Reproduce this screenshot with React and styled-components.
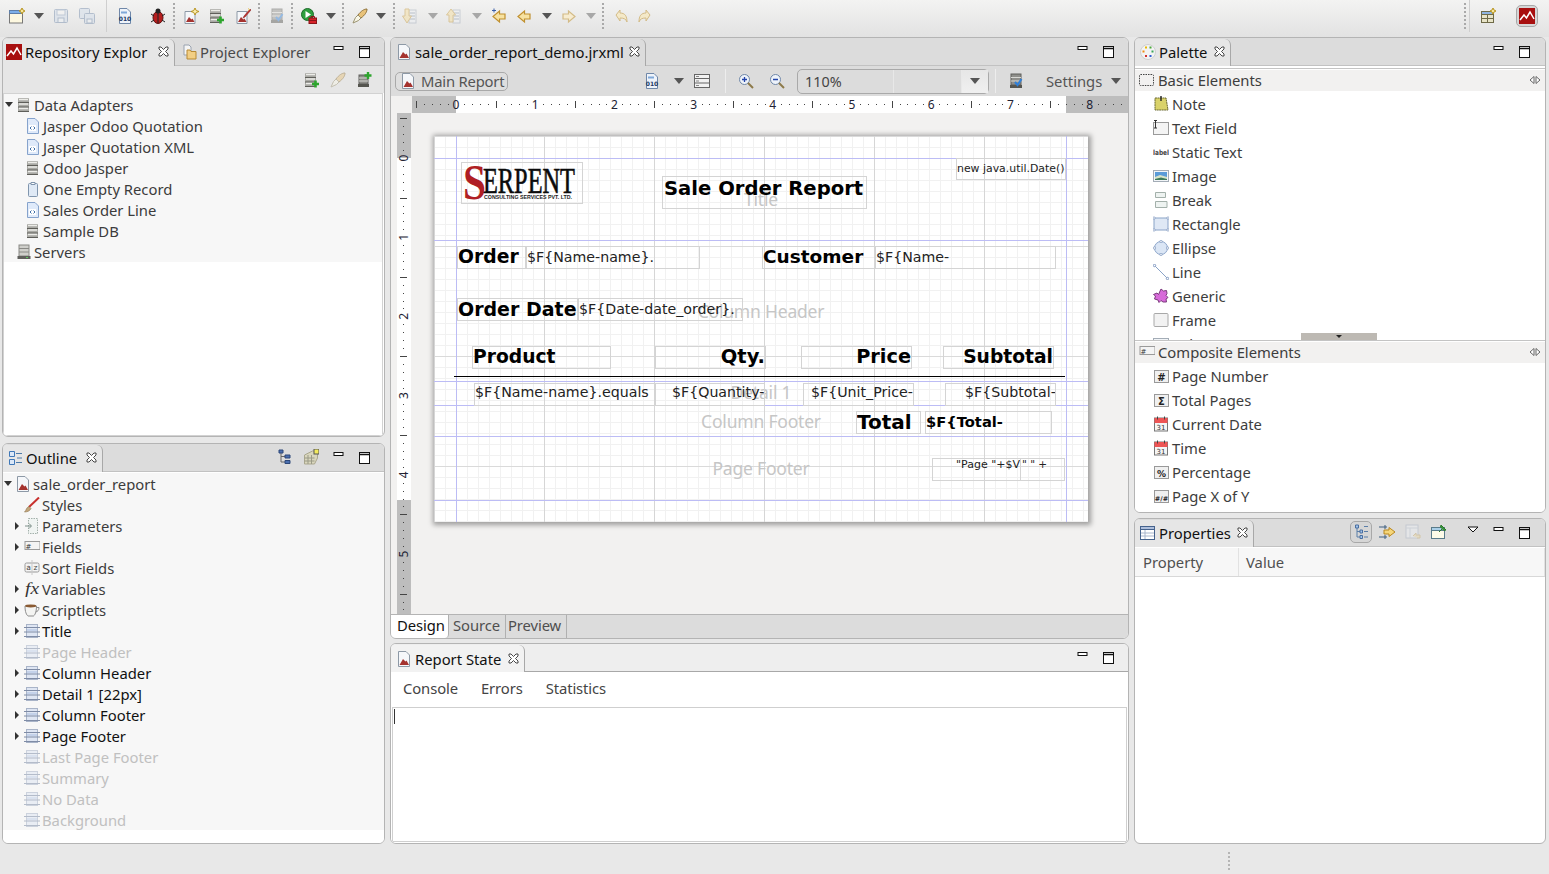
import React from 'react';
import styled, { createGlobalStyle } from 'styled-components';

const Global = createGlobalStyle`
  html, body { margin: 0; padding: 0; height: 100%; overflow: hidden; }
  body { background: #e8e8e8; font-family: "Noto Sans", "Open Sans", sans-serif; font-size: 14px; color: #3c3c3c; }
`;

const Shell = styled.div`
  width: 1549px;
  height: 874px;
  display: flex;
  flex-direction: column;
  background: #e8e8e8;
`;

const TopBar = styled.div`
  height: 37px;
  flex: none;
  display: flex;
  align-items: center;
  padding-bottom: 5px;
  box-sizing: border-box;
  background: linear-gradient(#f3f3f2, #e2e2e2);
`;

const ToolSlot = styled.span`
  flex: none;
  display: flex;
  align-items: center;
  justify-content: center;
  width: ${p => p.$w}px;
  margin-left: ${p => p.$gap}px;
  opacity: ${p => (p.$off ? 0.45 : 1)};
`;

const Dots = styled.span`
  display: block;
  height: 26px;
  border-left: 2px dotted #a9a9a9;
`;

const Rule = styled.span`
  display: block;
  height: ${p => p.$h || 32}px;
  border-left: 1px solid ${p => p.$c || '#cfcfcf'};
`;

const Pressed = styled.span`
  display: flex;
  padding: 2px;
  margin: 0 -3px;
  border: 1px solid #a8a8a8;
  border-radius: 5px;
  background: #d6d6d6;
`;

const Columns = styled.div`
  flex: none;
  height: 807px;
  display: grid;
  grid-template-columns: 383px 739px 412px;
  column-gap: 5px;
  padding-left: 2px;
`;

const Column = styled.div`
  display: flex;
  flex-direction: column;
  gap: ${p => p.$gap}px;
  min-height: 0;
`;

const Panel = styled.section`
  height: ${p => p.$h}px;
  flex: none;
  box-sizing: border-box;
  display: flex;
  flex-direction: column;
  border: 1px solid #b4b4b4;
  border-radius: 6px;
  background: #fff;
  overflow: hidden;
`;

const Strip = styled.div`
  height: 27px;
  flex: none;
  display: flex;
  align-items: flex-end;
  background: ${p => p.$light ? '#eeeeee' : '#dcdcdc'};
  border-bottom: 1px solid ${p => p.$light ? '#a8a8a8' : '#c2c2c2'};
`;

const Tab = styled.div`
  height: 27px;
  box-sizing: border-box;
  width: ${p => p.$w}px;
  flex: none;
  display: flex;
  align-items: center;
  gap: 3px;
  padding: 0 0 ${p => (p.$low ? 0 : 2)}px ${p => p.$pad || 4}px;
  margin-bottom: -1px;
  color: ${p => (p.$active ? '#111' : '#4a4a4a')};
  font-size: 14.8px;
  white-space: nowrap;
  background: ${p => p.$active ? p.$bg || '#e6e6e6' : 'transparent'};
  border-right: 1px solid ${p => (p.$active ? '#a8a8a8' : 'transparent')};
  border-top-right-radius: 6px;
`;

const CloseMark = styled.svg`
  width: 11px;
  height: 11px;
  margin-left: auto;
  margin-right: 5px;
  flex: none;
`;

const StripEnd = styled.div`
  margin-left: auto;
  height: 27px;
  display: flex;
  align-items: center;
  gap: 10px;
  padding-right: ${p => p.$right || 11}px;
  padding-bottom: 2px;
  box-sizing: border-box;
`;

const Nudge = styled.span`
  margin-left: -8px;
`;

const ViewBar = styled.div`
  height: 27px;
  flex: none;
  display: flex;
  align-items: center;
  justify-content: flex-end;
  gap: 10px;
  padding-right: 12px;
  background: #e6e6e6;
`;

const TreeBox = styled.div`
  flex: 1;
  min-height: 0;
  margin: ${p => (p.$boxed ? '0 1px 0 0' : '1px 0 0')};
  background: #fff;
  border: ${p => (p.$boxed ? '1px solid #d2d2d2' : 'none')};
`;

const TreeFill = styled.div`
  background: #f7f7f7;
`;

const Row = styled.div`
  height: 21px;
  display: flex;
  align-items: center;
  gap: 2px;
  padding-left: ${p => p.$level * 9}px;
  white-space: nowrap;
  font-size: 14.8px;
  color: ${p => (p.$muted ? '#c0c0c0' : p.$dark ? '#111' : '#3c3c3c')};
`;

const Twist = styled.span`
  width: 9px;
  flex: none;
  display: flex;
  justify-content: center;
  &::before {
    content: '';
    display: ${p => (p.$open === undefined ? 'none' : 'block')};
    border-style: solid;
    border-color: transparent;
    ${p => p.$open
      ? 'border-width: 5px 4px 0 4px; border-top-color: #333;'
      : 'border-width: 4px 0 4px 4px; border-left-color: #333;'}
  }
`;

const IconSlot = styled.span`
  width: 17px;
  height: 16px;
  flex: none;
  display: flex;
  justify-content: center;
  align-items: center;
  opacity: ${p => (p.$off ? 0.55 : 1)};
`;

/* editor */
const EditBar = styled.div`
  height: 30px;
  flex: none;
  display: flex;
  align-items: center;
  background: #dcdcdc;
  padding-left: 4px;
`;

const ModeBtn = styled.div`
  width: 113px;
  height: 19px;
  box-sizing: border-box;
  display: flex;
  align-items: center;
  gap: 5px;
  padding-left: 4px;
  border: 1px solid #a9a9a9;
  border-radius: 5px;
  background: #dedede;
  color: #555;
  font-size: 14.8px;
  letter-spacing: -0.2px;
`;

const EditTool = styled.span`
  flex: none;
  display: flex;
  justify-content: center;
  width: ${p => p.$w}px;
  margin-left: ${p => p.$gap || 0}px;
`;

const Combo = styled.div`
  width: 192px;
  height: 25px;
  box-sizing: border-box;
  flex: none;
  margin-left: 12px;
  display: grid;
  grid-template-columns: 96px 68px 1fr;
  border: 1px solid #a9a9a9;
  border-radius: 5px;
  background: #dcdcdc;
  color: #444;
  font-size: 14.4px;
  line-height: 23px;
`;

const ComboCell = styled.span`
  padding-left: ${p => p.$pad || 0}px;
  border-right: ${p => (p.$end ? 'none' : '1px solid #e8e8e8')};
  display: flex;
  align-items: center;
  justify-content: ${p => (p.$end ? 'center' : 'flex-start')};
  background: ${p => (p.$end ? 'linear-gradient(#e6e6e6, #f0f0f0)' : 'transparent')};
`;

const SettingsLabel = styled.span`
  margin-left: 22px;
  color: #555;
  font-size: 14.8px;
`;

const TopRuler = styled.div`
  height: 17px;
  flex: none;
  display: flex;
  background: #f2f1f0;
`;

const RulerH = styled.svg`
  margin-left: 21px;
  display: block;
`;

const Work = styled.div`
  flex: 1;
  min-height: 0;
  display: flex;
  background: #f2f1f0;
`;

const RulerV = styled.svg`
  margin-left: 6px;
  flex: none;
  display: block;
`;

const Canvas = styled.div`
  flex: 1;
  padding: 23px 0 0 22px;
  overflow: hidden;
`;

const Page = styled.div`
  position: relative;
  width: 654px;
  height: 386px;
  background-color: #fff;
  background-image:
    linear-gradient(to right, #d6d6d6 1px, transparent 1px),
    linear-gradient(to bottom, #dadada 1px, transparent 1px),
    linear-gradient(to right, #f1f1f1 1px, transparent 1px),
    linear-gradient(to bottom, #f1f1f1 1px, transparent 1px);
  background-size: 110px 110px, 110px 110px, 11px 11px, 11px 11px;
  box-shadow: 1px 1px 5px 2px rgba(0, 0, 0, 0.35);
`;

const Guide = styled.div`
  position: absolute;
  background: #bcbcf5;
  ${p => p.$x !== undefined
    ? `left:${p.$x - 434}px; top:0; bottom:0; width:1px;`
    : `top:${p.$y - 136}px; left:0; right:0; height:1px;`}
`;

const Cell = styled.div`
  position: absolute;
  left: ${p => p.$x - 434}px;
  top: ${p => p.$y - 136}px;
  width: ${p => p.$w}px;
  height: ${p => p.$h}px;
  box-sizing: border-box;
  border: 1px solid #d4d4d4;
  display: flex;
  align-items: ${p => p.$top ? 'flex-start' : 'center'};
  justify-content: ${p => p.$right ? 'flex-end' : 'flex-start'};
  white-space: nowrap;
  overflow: hidden;
  font-family: "DejaVu Sans", sans-serif;
  font-size: ${p => p.$size || 14.2}px;
  line-height: ${p => (p.$top ? 1 : 'normal')};
  font-weight: ${p => (p.$bold ? 700 : 400)};
  color: ${p => (p.$bold ? '#000' : '#222')};
  padding: ${p => p.$pad || '0 0 2px 0'};
`;

const BandName = styled.div`
  position: absolute;
  left: 0;
  width: 654px;
  top: ${p => p.$y - 136 - 12}px;
  height: 22px;
  line-height: 22px;
  text-align: center;
  font-size: 17.5px;
  letter-spacing: -0.2px;
  color: #c6c6c6;
`;

const HeadLine = styled.div`
  position: absolute;
  left: 20px;
  top: 240px;
  width: 611px;
  height: 1px;
  background: #000;
`;

const EditorTabs = styled.div`
  height: 23px;
  flex: none;
  display: flex;
  background: #dcdcdc;
  border-top: 1px solid #b4b4b4;
`;

const BottomTab = styled.div`
  width: ${p => p.$w}px;
  box-sizing: border-box;
  padding-left: ${p => p.$pad}px;
  line-height: 21px;
  font-size: 14.8px;
  letter-spacing: -0.1px;
  color: ${p => (p.$active ? '#111' : '#4f4f4f')};
  background: ${p => (p.$active ? '#fff' : 'transparent')};
  border-right: 1px solid #b0b0b0;
  border-bottom-right-radius: ${p => (p.$active ? 4 : 0)}px;
`;

/* report state */
const StateBody = styled.div`
  flex: 1;
  min-height: 0;
  display: flex;
  flex-direction: column;
  background: #fff;
`;

const StateTabs = styled.div`
  height: 35px;
  box-sizing: border-box;
  flex: none;
  display: flex;
  align-items: center;
  gap: 23px;
  padding: 0 0 3px 12px;
  color: #444;
  font-size: 14.8px;
  letter-spacing: -0.1px;
`;

const Console = styled.div`
  flex: 1;
  margin: 0 1px 1px 1px;
  border: 1px solid #cfcfcf;
  background: #fff;
  padding: 1px 0 0 1px;
`;

const Caret = styled.div`
  width: 1px;
  height: 15px;
  background: #333;
`;

/* palette */
const PaletteBody = styled.div`
  flex: 1;
  min-height: 0;
  display: flex;
  flex-direction: column;
  padding-top: 2px;
  background: #fff;
`;

const Drawer = styled.div`
  height: ${p => p.$h}px;
  box-sizing: border-box;
  flex: none;
  overflow: hidden;
  position: relative;
  border-top: 1px solid #c4c4c4;
  padding-top: 1px;
`;

const DrawerHead = styled.div`
  height: 21px;
  box-sizing: border-box;
  margin-bottom: 1px;
  display: flex;
  align-items: center;
  gap: 3px;
  padding: 0 4px 2px 4px;
  background: #f2f1f0;
  font-size: 14.8px;
  color: #3d3d3d;
`;

const DrawerItem = styled.div`
  height: 24px;
  display: flex;
  align-items: center;
  gap: 3px;
  padding-left: 17px;
  font-size: 14.8px;
  color: #3d3d3d;
  white-space: nowrap;
`;

const Flip = styled.svg`
  margin-left: auto;
`;

const Scroller = styled.div`
  position: absolute;
  left: 166px;
  bottom: 0;
  width: 76px;
  height: 7px;
  background: #bdb9b3;
  display: flex;
  justify-content: center;
  &::before {
    content: '';
    margin-top: 2px;
    height: 0;
    border-style: solid;
    border-width: 3px 3px 0 3px;
    border-color: #222 transparent transparent;
  }
`;

const PropHead = styled.div`
  height: 28px;
  flex: none;
  margin-top: 1px;
  display: grid;
  grid-template-columns: 104px 1fr;
  background: #f7f7f7;
  border-bottom: 1px solid #d8d8d8;
  font-size: 14.8px;
  color: #505050;
`;

const PropCell = styled.div`
  display: flex;
  align-items: center;
  padding-left: ${p => p.$pad}px;
  border-right: 1px solid #e2e2e2;
`;

const StatusBar = styled.div`
  flex: 1;
  display: flex;
  align-items: center;
  padding: 3px 0 0 1228px;
`;

const StatusGrip = styled.span`
  display: block;
  height: 18px;
  border-left: 2px dotted #b5b5b5;
`;

/* icons */
const Svg = ({ s = 16, children }) => (
  <svg width={s} height={s} viewBox="0 0 16 16">{children}</svg>
);

const Doc = ({ fill = '#f5f7fa', line = '#8d99a6' }) => (
  <path d="M2.5 .5h7.5l3.5 3.5v11.5h-11z" fill={fill} stroke={line} />
);
const Stack = ({ x = 2 }) => (
  <g>
    <rect x={x} y="1" width="11" height="14" rx="1" fill="#a9a9a4" />
    <path d={`M${x} 5.500h11M${x} 10h11M${x} 14.500h11`} stroke="#5f5f5a" />
    <path d={`M${x + 1} 2.500h9M${x + 1} 7h9M${x + 1} 11.500h9`} stroke="#ecece8" strokeWidth="1.500" />
  </g>
);
const Plus = () => <path d="M11.500 8.500v7M8 12h7" stroke="#2ea52e" strokeWidth="2.600" />;
const Band = () => (
  <g>
    <rect x="2.500" y="1.500" width="11" height="13" fill="#dfe6f3" stroke="#a9b4c8" />
    <path d="M0 4.500h16M0 9h16M0 13.500h16" stroke="#7f8ca6" />
    <path d="M3 6h10v2H3z" fill="#c4d2ea" />
  </g>
);
const Cal = () => (
  <g>
    <rect x="1.500" y="2" width="13" height="13" fill="#f5f5f5" stroke="#777" />
    <rect x="1.500" y="2" width="13" height="5" fill="#ee5555" />
    <path d="M4.500 .5v3M11.500 .5v3" stroke="#444" />
    <text x="8" y="14" fontSize="7" textAnchor="middle" fontFamily="DejaVu Sans" fill="#333">31</text>
  </g>
);
const Chip = ({ t, size = 10 }) => (
  <g>
    <rect x="1.500" y="2.500" width="14" height="12" fill="#f0f0f0" stroke="#999" />
    <text x="8.500" y="12.500" fontSize={size} textAnchor="middle" fontWeight="700" fontFamily="DejaVu Sans" fill="#222">{t}</text>
  </g>
);
const Mountain = () => <path d="M3.500 14l3.500-6 2.500 2.500 1-1 2.500 4.500z" fill="#a5332f" />;
const ArrowDoc = ({ up }) => (
  <g>
    <rect x="8" y="2" width="7" height="13" fill="#eef1f5" stroke="#a0aab8" />
    <path d="M9 5h5M9 8h5M9 11h5" stroke="#7c8aa0" />
    <path d={up ? 'M6 1l4.500 6H8v7H4V7H1.500z' : 'M4 1h4v7h2.500L6 15 1.500 8H4z'} fill="#f6dd9a" stroke="#c59a3c" />
  </g>
);
const Hand = ({ dir = 1, fill = '#f7e2a1', line = '#c0902f' }) => (
  <path transform={dir < 0 ? 'translate(16 0) scale(-1 1)' : undefined} d="M7.500 3v3H2v5h5.500v3L14 8.500z" fill={fill} stroke={line} strokeWidth="1.200" />
);
const ReportStar = () => (
  <g>
    <path d="M2 3.500h10v12H2z" fill="#f5f7fa" stroke="#8d99a6" />
    <path d="M3 14l3-5 2.500 2.500 1-1 2 3.500z" fill="#a5332f" />
  </g>
);

const icons = {
  report: <Svg><Doc /><Mountain /></Svg>,
  server: <Svg><Stack /></Svg>,
  serverAdd: <Svg><Stack x={1} /><Plus /></Svg>,
  xml: (
    <Svg>
      <Doc fill="#dfeafa" line="#86a3cc" />
      <rect x="4" y="7" width="7" height="6" fill="#fff" />
      <path d="M6.500 8.500L5 10l1.500 1.500M8.500 8.500L10 10l-1.500 1.500" fill="none" stroke="#3f6fa8" />
    </Svg>
  ),
  empty: <Svg><rect x="3.500" y="2.500" width="9" height="13" rx="1" fill="#dfe9f5" stroke="#8095ad" /><path d="M6 1.500h4v2H6z" fill="#fff" stroke="#8095ad" /></Svg>,
  host: (
    <Svg>
      <rect x="3" y="1" width="10" height="11" fill="#cfcfcb" stroke="#8a8a86" />
      <path d="M3 4.500h10M3 8h10" stroke="#8a8a86" />
      <rect x="1.500" y="12" width="13" height="3" fill="#5f5f5c" />
      <rect x="10" y="13" width="2" height="1" fill="#5fc85f" />
    </Svg>
  ),
  hostAdd: (
    <Svg>
      <rect x="3" y="3" width="9" height="9" fill="#8d8d88" stroke="#5f5f5c" />
      <path d="M3 6h9M3 9h9" stroke="#d8d8d4" />
      <rect x="2" y="12" width="11" height="3" fill="#55554f" />
      <path d="M12 0v7M8.500 3.500h7" stroke="#2ea52e" strokeWidth="2.400" />
    </Svg>
  ),
  jasper: (
    <Svg>
      <rect width="16" height="16" fill="#a80f0f" />
      <path d="M1 12l4-5 2.500 3L11 4l4 7" fill="none" stroke="#fff" strokeWidth="1.500" />
    </Svg>
  ),
  folder: (
    <Svg>
      <path d="M3 1h5l2 2v8H3z" fill="#f5f5f5" stroke="#9aa3b0" />
      <path d="M6 6h3l1 1.500h5V15H6z" fill="#f2cf85" stroke="#b88a35" />
    </Svg>
  ),
  outline: (
    <Svg>
      <path d="M2.500 1.500h5v5h-5zM2.500 9.500h5v5h-5z" fill="#dbe8f8" stroke="#3f78b8" />
      <path d="M9 3.500h6M10 8h5M9 12.500h6" stroke="#4d7aa8" strokeWidth="1.200" />
    </Svg>
  ),
  tree: (
    <Svg>
      <path d="M4 2v11h4M4 7.500h4" fill="none" stroke="#666" />
      <path d="M2 1h4v3H2zM8 6h5v3H8zM8 11.500h5v3H8z" fill="#4a6fb0" stroke="#2c4778" />
    </Svg>
  ),
  tableStar: (
    <Svg>
      <path d="M1.500 6l8-4h5v7l-3 6h-10z" fill="#d9d6bd" stroke="#aaa78e" />
      <path d="M1.500 9h10M1.500 12h10M5 6v9M8.500 6v9" stroke="#9b9b88" />
      <rect x="11" y="0" width="5" height="5" fill="#f3ea5d" stroke="#555" />
    </Svg>
  ),
  styles: (
    <Svg>
      <path d="M15 .5L5 10" stroke="#c8302c" strokeWidth="2" />
      <path d="M5 9.500l2 2C6 14 3 15 .5 15c2-1.500 1.500-4.500 4.500-5.500z" fill="#c4a77d" stroke="#8a7046" strokeWidth=".6" />
    </Svg>
  ),
  params: (
    <Svg>
      <path d="M4.500 .5h9v15h-9z" fill="#f0f4f2" stroke="#a3b0aa" strokeDasharray="1.500 1" />
      <path d="M1 8h6M5 5.500L7.500 8 5 10.500" fill="none" stroke="#7e908a" />
    </Svg>
  ),
  field: (
    <Svg>
      <rect x="1" y="2.500" width="15" height="8" fill="#f4f4f4" stroke="#9a9a9a" />
      <text x="4.500" y="9.500" fontSize="7" textAnchor="middle" fontFamily="DejaVu Sans" fill="#333">#</text>
    </Svg>
  ),
  sort: (
    <Svg>
      <rect x="1" y="3" width="14" height="9" rx="1.500" fill="#f4f4f4" stroke="#9a9a9a" />
      <path d="M8 0v15" stroke="#c9c9c9" />
      <text x="4.500" y="10" fontSize="7.500" textAnchor="middle" fontFamily="DejaVu Sans" fill="#444">a</text>
      <text x="11.500" y="10" fontSize="7.500" textAnchor="middle" fontFamily="DejaVu Sans" fill="#444">z</text>
    </Svg>
  ),
  fx: <Svg><text x="1" y="12.500" fontSize="17" fontStyle="italic" fontFamily="Liberation Serif" fill="#333" textLength="14" lengthAdjust="spacingAndGlyphs">fx</text></Svg>,
  cup: (
    <Svg>
      <path d="M1 4h11.500c0 6-1.500 9-3 10H4C2.500 13 1 10 1 4z" fill="#f4f4f2" stroke="#8c8c8c" />
      <path d="M12.500 5.500h2.500c0 3-1.500 4-3.500 4.500" fill="none" stroke="#8c8c8c" />
      <ellipse cx="6.700" cy="4" rx="5.500" ry="1.400" fill="#8a5a32" />
    </Svg>
  ),
  band: <Svg><Band /></Svg>,
  palette: (
    <Svg>
      <circle cx="8" cy="8" r="7.500" fill="#f3f3f3" stroke="#cfcfcf" />
      <path d="M5 2.500h2v2H5z" fill="#e8b800" /><path d="M9.500 2.500h2v2h-2z" fill="#49a83a" />
      <path d="M2.500 6.500h2v2h-2z" fill="#ef8d12" /><path d="M11.500 6.500h2v2h-2z" fill="#3aa55a" />
      <path d="M5 11h2v2H5z" fill="#d22f2f" /><path d="M9.500 11h2v2h-2z" fill="#2f5fd2" />
    </Svg>
  ),
  drawer: <Svg><rect x=".5" y="2.500" width="14" height="11" rx="1" fill="none" stroke="#444" strokeDasharray="1.500 1" /></Svg>,
  note: (
    <Svg>
      <path d="M2 2h11l2 12H2z" fill="#d9d26a" stroke="#6c6a32" strokeDasharray="2 .5" />
      <path d="M8 0v5" stroke="#222" strokeWidth="1.400" />
    </Svg>
  ),
  textField: (
    <Svg>
      <rect x=".5" y="2.500" width="15" height="12" fill="#f4f4f4" stroke="#9a9a9a" />
      <path d="M2.500 0v8M1 .5h3M1 8h3" stroke="#333" fill="none" />
    </Svg>
  ),
  label: <Svg><text x="0" y="11" fontSize="7.200" fontWeight="700" textLength="16" lengthAdjust="spacingAndGlyphs" fontFamily="DejaVu Sans" fill="#444">label</text></Svg>,
  image: (
    <Svg>
      <rect x=".5" y="2.500" width="15" height="11" fill="#f2f5f8" stroke="#a3acb6" />
      <rect x="2" y="4" width="12" height="8" fill="#5a9bd8" />
      <path d="M2 9l5-2 7 2v3H2z" fill="#d7e3c8" />
      <path d="M2 11l6-1.500 6 1.500v1H2z" fill="#3d7a5a" />
    </Svg>
  ),
  pageBreak: (
    <Svg>
      <path d="M2.500 .5h10v5h-10zM2.500 9.500h11.500v6H2.500z" fill="#eef3f1" stroke="#a3b0aa" />
      <path d="M1 7.500h14" stroke="#fff" />
    </Svg>
  ),
  rect: (
    <Svg>
      <rect x="1" y="2" width="14" height="12" fill="#dfe8f5" stroke="#8aa3c8" />
      <path d="M0 1h2v2H0zM14 1h2v2h-2zM0 13h2v2H0zM14 13h2v2h-2z" fill="#fff" stroke="#7f99c0" strokeWidth=".6" />
    </Svg>
  ),
  ellipse: (
    <Svg>
      <circle cx="8" cy="8" r="6.500" fill="#dbe6f5" stroke="#8aa3c8" />
      <path d="M7 .5h2v2H7zM7 13.500h2v2H7zM.5 7h2v2h-2zM13.500 7h2v2h-2z" fill="#fff" stroke="#7f99c0" strokeWidth=".6" />
    </Svg>
  ),
  line: (
    <Svg>
      <path d="M1.500 1.500l13 13" stroke="#8aa3c8" />
      <circle cx="1.500" cy="1.500" r="1.200" fill="#fff" stroke="#7f99c0" />
      <circle cx="14.500" cy="14.500" r="1.200" fill="#fff" stroke="#7f99c0" />
    </Svg>
  ),
  generic: (
    <Svg>
      <path d="M8 1l2.500 2 3-.5.500 3-1 2 2 2-2 1.500.5 3H10l-2-1.500L6 14.500 5 12 1.500 11 2.500 8 .5 6.500 4 5 5.500 6.500z" fill="#d76ad9" stroke="#7b3b7d" />
    </Svg>
  ),
  frame: <Svg><rect x="1" y="1.500" width="14" height="13" rx="1" fill="#f2f2f2" stroke="#a8a8a8" /></Svg>,
  hash: <Svg><Chip t="#" /></Svg>,
  sigma: <Svg><Chip t="Σ" /></Svg>,
  cal: <Svg><Cal /></Svg>,
  percent: <Svg><Chip t="%" size={9} /></Svg>,
  pagexy: <Svg><Chip t="#/#" size={6.500} /></Svg>,
  table: (
    <Svg>
      <rect x=".5" y="1.500" width="14" height="13" fill="#fff" stroke="#45628c" />
      <rect x=".5" y="1.500" width="14" height="3" fill="#aebfdc" stroke="#45628c" />
      <path d="M1 8h13M1 11h13M5 5v9" stroke="#a8b6cc" />
    </Svg>
  ),
  treeProp: (
    <Svg>
      <path d="M4 3v10h3M4 7.500h3" fill="none" stroke="#5a7ea8" />
      <path d="M2.500 1h3v3h-3zM7 6h2.500v3H7zM7 11.500h2.500v3H7z" fill="#a3c4ea" stroke="#4a6fa0" />
      <path d="M11 2.500h4M11 7.500h4M11 13h4" stroke="#5a7ea8" />
    </Svg>
  ),
  advProp: (
    <Svg>
      <path d="M0 3h8M0 13h8M6 1v4M6 11v4" stroke="#3f5f80" />
      <path d="M5 6h5V3.500L16 8l-6 4.500V10H5z" fill="#f5d67a" stroke="#b8861f" />
    </Svg>
  ),
  restore: (
    <Svg>
      <rect x="1" y="1" width="12" height="13" fill="#eef1f5" stroke="#a9b4c4" />
      <path d="M1 4h12M5 4v10" stroke="#bcc5d2" />
      <path d="M8 12l3-3v2h4v3h-3" fill="#ecd9a8" stroke="#c7ab6c" />
    </Svg>
  ),
  pin: (
    <Svg>
      <rect x=".5" y="3.500" width="13" height="11" fill="#fdfbe8" stroke="#5a7b8a" />
      <rect x=".5" y="3.500" width="13" height="3" fill="#a9cfe8" stroke="#5a7b8a" />
      <path d="M8 8l3-3M10 1l5 5-2 .500-3.500-3.500z" fill="#3d9a3d" stroke="#2a7a2a" />
    </Svg>
  ),
  newWin: (
    <Svg>
      <rect x=".5" y="2.500" width="13" height="12.500" fill="#fdf8e0" stroke="#777" />
      <rect x=".5" y="2.500" width="13" height="3" fill="#7fb0e8" stroke="#5f7fa8" />
      <path d="M13 0l1 2 2 1-2 1-1 2-1-2-2-1 2-1z" fill="#f8e79a" stroke="#b8941f" />
    </Svg>
  ),
  perspective: (
    <Svg>
      <rect x="1.500" y="3.500" width="12" height="11" fill="#e8e4c8" stroke="#6e6a48" />
      <rect x="1.500" y="3.500" width="12" height="3" fill="#8fb4e0" stroke="#6e6a48" />
      <path d="M7.500 6.500v8M1.500 10.500h12" stroke="#6e6a48" />
      <path d="M13 0l1 2 2 1-2 1-1 2-1-2-2-1 2-1z" fill="#f8e79a" stroke="#b8941f" />
    </Svg>
  ),
  save: (
    <Svg>
      <rect x="1.500" y="1.500" width="13" height="13" rx="1" fill="#cfdbea" stroke="#6f87a8" />
      <rect x="4" y="2" width="8" height="5" fill="#f5f5f5" stroke="#8aa0bd" />
      <rect x="5" y="10" width="6" height="4.500" fill="#eef2f7" stroke="#6f87a8" />
    </Svg>
  ),
  saveAll: (
    <Svg>
      <rect x=".5" y=".5" width="10" height="10" rx="1" fill="#cfdbea" stroke="#6f87a8" />
      <rect x="5.500" y="5.500" width="10" height="10" rx="1" fill="#cfdbea" stroke="#6f87a8" />
      <rect x="8" y="11" width="5" height="4" fill="#eef2f7" stroke="#6f87a8" />
    </Svg>
  ),
  bin: (
    <Svg>
      <Doc fill="#eef3fa" line="#6f87a8" />
      <rect x="4" y="3.500" width="6" height="2" fill="#7fa8d8" />
      <text x="8" y="13" fontSize="6" fontWeight="700" textAnchor="middle" fontFamily="DejaVu Sans" fill="#223a66">010</text>
    </Svg>
  ),
  bug: (
    <Svg>
      <ellipse cx="8" cy="9.500" rx="5" ry="6" fill="#b51e1e" stroke="#5f1010" />
      <circle cx="8" cy="3" r="2.500" fill="#222" />
      <path d="M8 4v11M1 6l3 2M15 6l-3 2M1 14l3-2M15 14l-3-2" stroke="#222" />
    </Svg>
  ),
  addReport: (
    <Svg>
      <ReportStar />
      <path d="M12 0l1.200 2.500 2.800 1-2.800 1L12 7l-1.200-2.500L8 3.500l2.800-1z" fill="#fbeeb0" stroke="#b8941f" />
    </Svg>
  ),
  editReport: (
    <Svg>
      <ReportStar />
      <path d="M15 1l1 1-6 7-2 1 1-2z" fill="#c8302c" stroke="#7a1c1c" strokeWidth=".5" />
      <path d="M13 .5l1.500 1-1 1" stroke="#e8c75a" fill="none" />
    </Svg>
  ),
  check: (
    <Svg>
      <rect x="3" y="1" width="10" height="11" fill="#8f8f8b" stroke="#5f5f5b" />
      <path d="M3 4.500h10M3 8h10" stroke="#d8d8d4" />
      <rect x="2" y="12" width="12" height="3" fill="#55554f" />
      <path d="M7 9l2.500 3 4-6" fill="none" stroke="#2f7fd8" strokeWidth="2" />
    </Svg>
  ),
  run: (
    <Svg>
      <circle cx="6.500" cy="6.500" r="6" fill="#2f9f3f" stroke="#1d6b2a" />
      <path d="M4.500 3l5.500 3.500L4.500 10z" fill="#fff" />
      <rect x="8" y="10" width="7.500" height="5.500" fill="#d8232a" stroke="#8a1418" />
      <path d="M10 10V8.500h3.500V10M8 12.500h7.500" fill="none" stroke="#8a1418" />
    </Svg>
  ),
  pen: (
    <Svg>
      <path d="M15 1c0 3-2 6-6 9l-3-3c3-4 6-6 9-6z" fill="#e8c27a" stroke="#8f7136" />
      <path d="M6 7l3 3-2.500 2.500L1 15l2.500-5.500z" fill="#f8f6e6" stroke="#9a9270" />
    </Svg>
  ),
  downDoc: <Svg><ArrowDoc /></Svg>,
  upDoc: <Svg><ArrowDoc up /></Svg>,
  backStar: (
    <Svg>
      <Hand dir={-1} />
      <path d="M3 .5v4M1 2.500h4" stroke="#3a5fa8" />
    </Svg>
  ),
  back: <Svg><Hand dir={-1} /></Svg>,
  fwd: <Svg><Hand fill="#f7ecd0" line="#d3bb86" /></Svg>,
  undo: <Svg><path d="M3 7l4-5v3c5 0 7 3 7 9-1-3-3-4-7-4v3z" fill="#f4e9c8" stroke="#d3bb86" /></Svg>,
  redo: <Svg><path d="M13 7L9 2v3C4 5 2 8 2 14c1-3 3-4 7-4v3z" fill="#f4e9c8" stroke="#d3bb86" /></Svg>,
  arrow: <svg width="10" height="6" viewBox="0 0 10 6"><path d="M0 0h10L5 6z" fill="#555" /></svg>,
  zoomIn: (
    <Svg>
      <circle cx="6.500" cy="6.500" r="5" fill="#eef3fa" stroke="#6f87a8" />
      <path d="M10 10l5 5" stroke="#8d7a4a" strokeWidth="2" />
      <path d="M4 6.500h5M6.500 4v5" stroke="#2244aa" strokeWidth="1.300" />
    </Svg>
  ),
  zoomOut: (
    <Svg>
      <circle cx="6.500" cy="6.500" r="5" fill="#eef3fa" stroke="#6f87a8" />
      <path d="M10 10l5 5" stroke="#8d7a4a" strokeWidth="2" />
      <path d="M4 6.500h5" stroke="#2244aa" strokeWidth="1.300" />
    </Svg>
  ),
  bands: (
    <Svg>
      <rect x=".5" y="1.500" width="15" height="13" fill="#f2f2f2" stroke="#666" />
      <path d="M1 5.500h14M1 10h14" stroke="#666" />
      <path d="M2 3.500h3M2 8h3M2 12.500h3" stroke="#888" />
    </Svg>
  ),
};

const Close = () => (
  <CloseMark viewBox="0 0 11 11">
    <path d="M1 1h2l2.500 2.500L8 1h2v2L7.500 5.500 10 8v2H8L5.500 7.500 3 10H1V8l2.500-2.500L1 3z" fill="#fff" stroke="#333" strokeWidth=".9" />
  </CloseMark>
);

const WinControls = ({ extra, right }) => (
  <StripEnd $right={right}>
    {extra}
    <svg width="16" height="16" viewBox="0 0 16 16"><rect x="3" y="3.500" width="9" height="3" fill="#fff" stroke="#111" /></svg>
    <svg width="16" height="16" viewBox="0 0 16 16"><rect x="2.500" y="3.500" width="10" height="11" fill="#fff" stroke="#111" /><path d="M2.500 5.500h10" stroke="#111" strokeWidth="1.500" /></svg>
  </StripEnd>
);

// centre x of every item on the main toolbar
const mainTools = [
  ['newWin', 17], ['arrow', 39], ['save', 61, 1], ['saveAll', 87, 1], ['|', 106], ['bin', 125],
  ['bug', 158], [':', 174], ['addReport', 191], ['serverAdd', 217], ['editReport', 243], [':', 259],
  ['check', 277, 1], [':', 292], ['run', 309], ['arrow', 331], [':', 343], ['pen', 360], ['arrow', 381],
  [':', 394], ['downDoc', 409, 1], ['arrow', 433, 1], ['upDoc', 453, 1], ['arrow', 477, 1],
  ['backStar', 499], ['back', 524], ['arrow', 547], ['fwd', 569], ['arrow', 591, 1], [':', 603],
  ['undo', 621], ['redo', 645],
];

const slotWidth = k => (k === 'arrow' ? 10 : k === ':' || k === '|' ? 2 : 16);

function MainToolbar() {
  let right = 0;
  return (
    <TopBar>
      {mainTools.map(([k, c, off], i) => {
        const w = slotWidth(k);
        const gap = c - w / 2 - right;
        right = c + w / 2;
        return (
          <ToolSlot key={i} $w={w} $gap={gap} $off={off}>
            {k === ':' ? <Dots /> : k === '|' ? <Rule /> : icons[k]}
          </ToolSlot>
        );
      })}
      <ToolSlot $w={2} $gap={1464 - right}><Dots /></ToolSlot>
      <ToolSlot $w={1} $gap={3}><Rule /></ToolSlot>
      <ToolSlot $w={16} $gap={10}>{icons.perspective}</ToolSlot>
      <ToolSlot $w={24} $gap={19}><Pressed>{icons.jasper}</Pressed></ToolSlot>
    </TopBar>
  );
}

const repoRows = [
  { l: 0, open: true, i: 'server', t: 'Data Adapters' },
  { l: 1, i: 'xml', t: 'Jasper Odoo Quotation' },
  { l: 1, i: 'xml', t: 'Jasper Quotation XML' },
  { l: 1, i: 'server', t: 'Odoo Jasper' },
  { l: 1, i: 'empty', t: 'One Empty Record' },
  { l: 1, i: 'xml', t: 'Sales Order Line' },
  { l: 1, i: 'server', t: 'Sample DB' },
  { l: 0, i: 'host', t: 'Servers' },
];

const outlineRows = [
  { l: 0, open: true, i: 'report', t: 'sale_order_report' },
  { l: 1, i: 'styles', t: 'Styles' },
  { l: 1, open: false, i: 'params', t: 'Parameters' },
  { l: 1, open: false, i: 'field', t: 'Fields' },
  { l: 1, i: 'sort', t: 'Sort Fields' },
  { l: 1, open: false, i: 'fx', t: 'Variables' },
  { l: 1, open: false, i: 'cup', t: 'Scriptlets' },
  { l: 1, open: false, i: 'band', t: 'Title', dark: true },
  { l: 1, i: 'band', t: 'Page Header', muted: true },
  { l: 1, open: false, i: 'band', t: 'Column Header', dark: true },
  { l: 1, open: false, i: 'band', t: 'Detail 1 [22px]', dark: true },
  { l: 1, open: false, i: 'band', t: 'Column Footer', dark: true },
  { l: 1, open: false, i: 'band', t: 'Page Footer', dark: true },
  { l: 1, i: 'band', t: 'Last Page Footer', muted: true },
  { l: 1, i: 'band', t: 'Summary', muted: true },
  { l: 1, i: 'band', t: 'No Data', muted: true },
  { l: 1, i: 'band', t: 'Background', muted: true },
];

const Tree = ({ rows }) => (
  <TreeFill>
    {rows.map(r => (
      <Row key={r.t} $level={r.l} $muted={r.muted} $dark={r.dark}>
        <Twist $open={r.open} />
        <IconSlot $off={r.muted}>{icons[r.i]}</IconSlot>
        {r.t}
      </Row>
    ))}
  </TreeFill>
);

const basicItems = [
  ['note', 'Note'], ['textField', 'Text Field'], ['label', 'Static Text'], ['image', 'Image'],
  ['pageBreak', 'Break'], ['rect', 'Rectangle'], ['ellipse', 'Ellipse'], ['line', 'Line'],
  ['generic', 'Generic'], ['frame', 'Frame'], ['image', 'Subreport'],
];
const compositeItems = [
  ['hash', 'Page Number'], ['sigma', 'Total Pages'], ['cal', 'Current Date'], ['cal', 'Time'],
  ['percent', 'Percentage'], ['pagexy', 'Page X of Y'],
];

const FlipMark = () => (
  <Flip width="12" height="8" viewBox="0 0 12 8">
    <path d="M5 .5L1 4l4 3.500zM7 .5L11 4 7 7.500z" fill="#fff" stroke="#666" />
  </Flip>
);

function RulerTop() {
  const w = 717, zero = 44, unit = 79.2;
  const marks = [];
  for (let i = -5; i <= 85; i++) {
    const x = zero + i * unit / 10;
    if (x < 0 || x > w) continue;
    if (i % 10 === 0) continue;
    marks.push(<rect key={i} x={Math.round(x)} y={i % 5 === 0 ? 5 : 8} width="1" height={i % 5 === 0 ? 7 : 1} fill="#444" />);
  }
  return (
    <RulerH width={w} height="17">
      <rect width={w} height="17" fill="#fff" />
      <rect width={zero} height="17" fill="#bdbdbd" />
      <rect x={654} width={w - 654} height="17" fill="#bdbdbd" />
      {marks}
      {[0, 1, 2, 3, 4, 5, 6, 7, 8].map(n => (
        <text key={n} x={zero + n * unit} y="13" fontSize="12" textAnchor="middle" fontFamily="Noto Sans" fill="#223">{n}</text>
      ))}
    </RulerH>
  );
}

function RulerLeft() {
  const h = 501, zero = 45, unit = 79.2;
  const marks = [];
  for (let i = -5; i <= 58; i++) {
    const y = zero + i * unit / 10;
    if (y < 0 || y > h || i % 10 === 0) continue;
    marks.push(<rect key={i} x={i % 5 === 0 ? 3 : 6} y={Math.round(y)} width={i % 5 === 0 ? 7 : 1} height="1" fill="#444" />);
  }
  return (
    <RulerV width="15" height={h}>
      <rect width="14" height={h} fill="#fff" />
      <rect width="14" height={zero} fill="#bdbdbd" />
      <rect y="387" width="14" height={h - 387} fill="#bdbdbd" />
      {marks}
      {[0, 1, 2, 3, 4, 5].map(n => (
        <text key={n} transform={`translate(11 ${zero + n * unit}) rotate(-90)`} fontSize="12" textAnchor="middle" fontFamily="Noto Sans" fill="#223">{n}</text>
      ))}
    </RulerV>
  );
}

const LogoBox = () => (
  <svg width="120" height="40" viewBox="0 0 120 40">
    <text x="1" y="36" fontSize="50" fontWeight="700" fontFamily="Liberation Serif" fill="#b01f24" textLength="23" lengthAdjust="spacingAndGlyphs">S</text>
    <text x="21" y="30" fontSize="35" fontFamily="Liberation Serif" fill="#0b0b0b" textLength="92" lengthAdjust="spacingAndGlyphs" stroke="#0b0b0b" strokeWidth=".6">ERPENT</text>
    <text x="22" y="36" fontSize="5.500" fontWeight="700" fontFamily="Liberation Sans" fill="#222" textLength="88" lengthAdjust="spacingAndGlyphs">CONSULTING SERVICES PVT. LTD.</text>
  </svg>
);

const reportCells = [
  { x: 956, y: 158, w: 110, h: 22, size: 10.9, t: 'new java.util.Date()' },
  { x: 662, y: 176, w: 205, h: 33, size: 19.6, bold: true, top: true, t: 'Sale Order Report', pad: '2px 0 0 1px' },
  { x: 457, y: 246, w: 69, h: 23, size: 18.8, bold: true, t: 'Order' },
  { x: 526, y: 246, w: 174, h: 23, t: '$F{Name-name}.' },
  { x: 762, y: 246, w: 114, h: 23, size: 18.5, bold: true, t: 'Customer' },
  { x: 875, y: 246, w: 181, h: 23, t: '$F{Name-' },
  { x: 457, y: 298, w: 121, h: 23, size: 19, bold: true, t: 'Order Date' },
  { x: 578, y: 298, w: 165, h: 23, t: '$F{Date-date_order}.' },
  { x: 472, y: 346, w: 139, h: 23, size: 18.7, bold: true, t: 'Product' },
  { x: 655, y: 346, w: 111, h: 23, size: 19.5, bold: true, right: true, t: 'Qty.' },
  { x: 801, y: 346, w: 111, h: 23, size: 19.3, bold: true, right: true, t: 'Price' },
  { x: 943, y: 346, w: 111, h: 23, size: 18.7, bold: true, right: true, t: 'Subtotal' },
  { x: 474, y: 383, w: 181, h: 23, t: '$F{Name-name}.equals', pad: '0 0 6px 0' },
  { x: 655, y: 383, w: 110, h: 23, t: '$F{Quantity-', pad: '0 0 6px 16px' },
  { x: 803, y: 383, w: 111, h: 23, t: '$F{Unit_Price-', pad: '0 0 6px 7px' },
  { x: 945, y: 383, w: 111, h: 23, t: '$F{Subtotal-', pad: '0 0 6px 19px' },
  { x: 856, y: 411, w: 65, h: 23, size: 20, bold: true, t: 'Total' },
  { x: 925, y: 411, w: 127, h: 23, size: 14.7, bold: true, t: '$F{Total-' },
  { x: 932, y: 458, w: 89, h: 23, size: 11, t: '"Page "+$V', top: true, pad: '0 0 0 23px' },
  { x: 1020, y: 458, w: 45, h: 23, size: 10.5, t: '" " +', top: true, pad: '0 0 0 1px' },
];

export default function App() {
  return (
    <Shell>
      <Global />
      <MainToolbar />
      <Columns>
        <Column $gap={6}>
          <Panel $h={400}>
            <Strip>
              <Tab $w={172} $pad={3} $active>
                {icons.jasper}
                <span>Repository Explor</span>
                <Close />
              </Tab>
              <Tab $w={145} $pad={6}>
                {icons.folder}
                <span>Project Explorer</span>
              </Tab>
              <WinControls />
            </Strip>
            <ViewBar>
              {icons.serverAdd}
              <ToolSlot $w={16} $gap={0} $off>{icons.pen}</ToolSlot>
              {icons.hostAdd}
            </ViewBar>
            <TreeBox $boxed>
              <Tree rows={repoRows} />
            </TreeBox>
          </Panel>
          <Panel $h={401}>
            <Strip>
              <Tab $w={100} $active>
                {icons.outline}
                <span>Outline</span>
                <Close />
              </Tab>
              <WinControls extra={<>{icons.tree}{icons.tableStar}<Nudge /></>} />
            </Strip>
            <TreeBox>
              <Tree rows={outlineRows} />
            </TreeBox>
          </Panel>
        </Column>

        <Column $gap={4}>
          <Panel $h={602}>
            <Strip>
              <Tab $w={255} $pad={5} $active $bg="#dcdcdc">
                {icons.report}
                <span>sale_order_report_demo.jrxml</span>
                <Close />
              </Tab>
              <WinControls />
            </Strip>
            <EditBar>
              <ModeBtn>{icons.report}Main Report</ModeBtn>
              <EditTool $w={16} $gap={136}>{icons.bin}</EditTool>
              <EditTool $w={10} $gap={14}>{icons.arrow}</EditTool>
              <EditTool $w={16} $gap={10}>{icons.bands}</EditTool>
              <ToolSlot $w={1} $gap={15}><Rule $h={24} $c="#ededed" /></ToolSlot>
              <EditTool $w={16} $gap={12}>{icons.zoomIn}</EditTool>
              <EditTool $w={16} $gap={15}>{icons.zoomOut}</EditTool>
              <Combo>
                <ComboCell $pad={7}>110%</ComboCell>
                <ComboCell />
                <ComboCell $end>{icons.arrow}</ComboCell>
              </Combo>
              <ToolSlot $w={1} $gap={6}><Rule $h={24} $c="#ededed" /></ToolSlot>
              <EditTool $w={16} $gap={12}>{icons.check}</EditTool>
              <SettingsLabel>Settings</SettingsLabel>
              <EditTool $w={10} $gap={9}>{icons.arrow}</EditTool>
            </EditBar>
            <TopRuler><RulerTop /></TopRuler>
            <Work>
              <RulerLeft />
              <Canvas>
                <Page>
                  {[158, 240, 381, 405, 436, 500].map(y => <Guide key={y} $y={y} />)}
                  {[456, 1066].map(x => <Guide key={x} $x={x} />)}
                  <BandName $y={200}>Title</BandName>
                  <BandName $y={312}>Column Header</BandName>
                  <BandName $y={393}>Detail 1</BandName>
                  <BandName $y={422}>Column Footer</BandName>
                  <BandName $y={469}>Page Footer</BandName>
                  <Cell $x={461} $y={162} $w={122} $h={42} $pad="0"><LogoBox /></Cell>
                  {reportCells.map(c => (
                    <Cell key={c.t} $x={c.x} $y={c.y} $w={c.w} $h={c.h} $size={c.size} $bold={c.bold} $right={c.right} $top={c.top} $pad={c.pad}>
                      {c.t}
                    </Cell>
                  ))}
                  <HeadLine />
                </Page>
              </Canvas>
            </Work>
            <EditorTabs>
              <BottomTab $w={58} $pad={6} $active>Design</BottomTab>
              <BottomTab $w={57} $pad={4}>Source</BottomTab>
              <BottomTab $w={61} $pad={2}>Preview</BottomTab>
            </EditorTabs>
          </Panel>
          <Panel $h={201}>
            <Strip $light>
              <Tab $w={134} $pad={5} $low $active $bg="#f2f2f2">
                {icons.report}
                <span>Report State</span>
                <Close />
              </Tab>
              <WinControls />
            </Strip>
            <StateBody>
              <StateTabs>
                <span>Console</span>
                <span>Errors</span>
                <span>Statistics</span>
              </StateTabs>
              <Console><Caret /></Console>
            </StateBody>
          </Panel>
        </Column>

        <Column $gap={5}>
          <Panel $h={476}>
            <Strip>
              <Tab $w={96} $active $pad={5}>
                {icons.palette}
                <span>Palette</span>
                <Close />
              </Tab>
              <WinControls right={12} />
            </Strip>
            <PaletteBody>
              <Drawer $h={272}>
                <DrawerHead>{icons.drawer}Basic Elements<FlipMark /></DrawerHead>
                {basicItems.map(([i, t]) => (
                  <DrawerItem key={t}><IconSlot>{icons[i]}</IconSlot>{t}</DrawerItem>
                ))}
                <Scroller />
              </Drawer>
              <Drawer $h={170}>
                <DrawerHead>{icons.field}Composite Elements<FlipMark /></DrawerHead>
                {compositeItems.map(([i, t]) => (
                  <DrawerItem key={t}><IconSlot>{icons[i]}</IconSlot>{t}</DrawerItem>
                ))}
              </Drawer>
            </PaletteBody>
          </Panel>
          <Panel $h={326}>
            <Strip>
              <Tab $w={119} $active $pad={5}>
                {icons.table}
                <span>Properties</span>
                <Close />
              </Tab>
              <WinControls
                right={12}
                extra={
                  <>
                    <Pressed>{icons.treeProp}</Pressed>
                    {icons.advProp}
                    <ToolSlot $w={16} $gap={0} $off>{icons.restore}</ToolSlot>
                    {icons.pin}
                    <ToolSlot $w={16} $gap={8}>
                      <svg width="16" height="16" viewBox="0 0 16 16"><path d="M3 3h10L8 8z" fill="#fff" stroke="#111" /></svg>
                    </ToolSlot>
                  </>
                }
              />
            </Strip>
            <PropHead>
              <PropCell $pad={8}>Property</PropCell>
              <PropCell $pad={7}>Value</PropCell>
            </PropHead>
          </Panel>
        </Column>
      </Columns>
      <StatusBar><StatusGrip /></StatusBar>
    </Shell>
  );
}
